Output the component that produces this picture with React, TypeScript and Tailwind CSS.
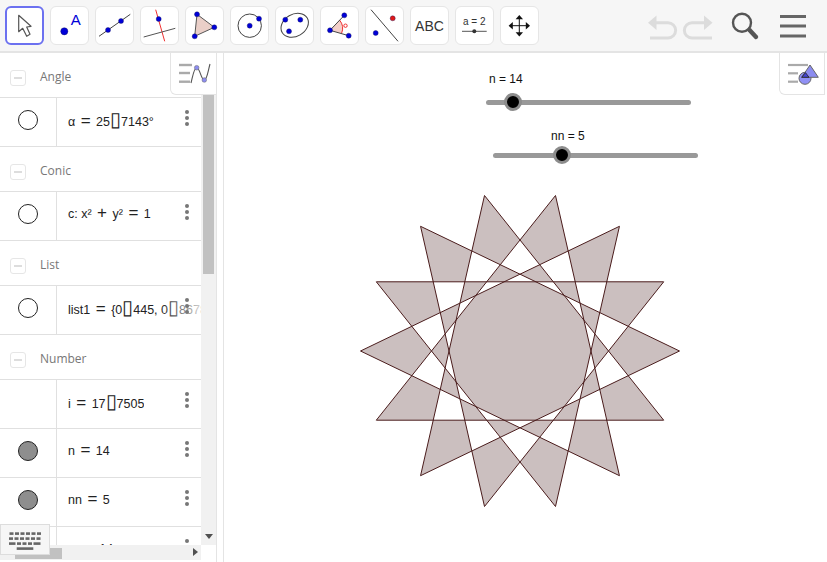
import React from "react";

const BLUE = "#0000d8";

const Pt = ({ x, y, r = 2.5, c = BLUE }: { x: number; y: number; r?: number; c?: string }) => (
  <circle cx={x} cy={y} r={r} fill={c} stroke="#1a1a5a" strokeWidth={0.4} />
);

const toolIcons: React.ReactNode[] = [
  <polygon key="0" points="13.7,9.3 13.7,25.7 17.7,22.3 21.7,30.3 25,28.3 21.7,21 26,20.3" fill="#fff" stroke="#555" strokeWidth={1.2} strokeLinejoin="round" />,
  <g key="1">
    <Pt x={14.3} y={25.3} r={3.6} />
    <text x={25.7} y={18.7} textAnchor="middle" fontSize={15} fill={BLUE} fontFamily="Liberation Sans, sans-serif">A</text>
  </g>,
  <g key="2">
    <line x1={4} y1={30.3} x2={35.3} y2={8.3} stroke="#444" />
    <Pt x={13} y={24} />
    <Pt x={26} y={15} />
  </g>,
  <g key="3">
    <line x1={15.7} y1={3.7} x2={24.7} y2={35.3} stroke="#f03030" />
    <line x1={3.7} y1={31} x2={35.3} y2={22.3} stroke="#555" />
    <Pt x={18.7} y={13} />
  </g>,
  <g key="4">
    <polygon points="12,8.3 29.3,21.3 9.7,30.3" fill="#eacfc8" stroke="#555" />
    <Pt x={12} y={8.3} />
    <Pt x={29.3} y={21.3} />
    <Pt x={9.7} y={30.3} />
  </g>,
  <g key="5">
    <circle cx={19.7} cy={19.7} r={11.7} fill="none" stroke="#444" />
    <Pt x={19.7} y={19.7} />
    <Pt x={29} y={12.7} />
  </g>,
  <g key="6">
    <ellipse cx={19.7} cy={19.3} rx={14.5} ry={11} fill="none" stroke="#444" transform="rotate(-30 19.7 19.3)" />
    <Pt x={10.3} y={13.7} />
    <Pt x={25.3} y={13.7} />
    <Pt x={14} y={25.3} />
  </g>,
  <g key="7">
    <path d="M10 24.3 L19.5 14 A13 13 0 0 1 21.5 27.5 Z" fill="#f3cfc9" />
    <path d="M19.5 14 A13 13 0 0 1 21.5 27.5" fill="none" stroke="#f03030" />
    <line x1={10} y1={24.3} x2={24.3} y2={9.3} stroke="#444" />
    <line x1={10} y1={24.3} x2={28.7} y2={29.7} stroke="#444" />
    <Pt x={10} y={24.3} />
    <Pt x={24.3} y={9.3} />
    <Pt x={28.7} y={29.7} />
    <circle cx={25.5} cy={19.7} r={1.7} fill="none" stroke="#f03030" />
  </g>,
  <g key="8">
    <line x1={6} y1={3.7} x2={33} y2={35.3} stroke="#444" />
    <Pt x={27.7} y={12.3} c="#e01818" />
    <Pt x={10.7} y={27} />
  </g>,
  <text key="9" x={19.5} y={24.7} textAnchor="middle" fontSize={14} fill="#333" fontFamily="Liberation Sans, sans-serif">ABC</text>,
  <g key="10">
    <text x={19.3} y={19} textAnchor="middle" fontSize={10} fill="#333" fontFamily="Liberation Sans, sans-serif">a = 2</text>
    <line x1={7} y1={25.3} x2={31.7} y2={25.3} stroke="#555" />
    <circle cx={19.3} cy={25.3} r={2} fill="#333" />
  </g>,
  <g key="11" fill="#111">
    <path d="M19.3 11 V28.4 M10.6 19.7 H28" stroke="#111" strokeWidth={1} />
    <polygon points="19.3,9 15.6,13.2 23,13.2" />
    <polygon points="19.3,30.4 15.6,26.2 23,26.2" />
    <polygon points="8.6,19.7 12.8,16 12.8,23.4" />
    <polygon points="30,19.7 25.8,16 25.8,23.4" />
  </g>,
];

const ToolButton = ({ active, children }: { active?: boolean; children: React.ReactNode }) => (
  <div
    className={`w-[39px] h-[39px] shrink-0 rounded-md bg-white ${
      active ? "border-2 border-[#6c71f0]" : "border border-[#e6e6e6]"
    }`}
  >
    <svg viewBox="0 0 39 39" className={`w-[39px] h-[39px] max-w-none ${active ? "-m-[2px]" : "-m-px"}`}>
      {children}
    </svg>
  </div>
);

const Toolbar = () => (
  <div className="h-[53px] shrink-0 flex items-start pt-[6px] pl-[5px] bg-[#f6f6f6] border-b-2 border-[#e4e4e4]">
    <div className="flex gap-[6px]">
      {toolIcons.map((icon, i) => (
        <ToolButton key={i} active={i === 0}>
          {icon}
        </ToolButton>
      ))}
    </div>
    <svg viewBox="0 0 176 46" className="w-[176px] h-[46px] ml-[103px] -mt-[6px]">
      <g fill="none" stroke="#dcdcdc" strokeWidth={3}>
        <path d="M12 22.7 H26 A7.6 7.6 0 0 1 26 38 H8" />
        <path d="M63 22.7 H50 A7.6 7.6 0 0 0 50 38 H70" />
      </g>
      <polygon points="6,22.7 14.5,15.5 14.5,30" fill="#dcdcdc" />
      <polygon points="70.5,22.7 62,15.5 62,30" fill="#dcdcdc" />
      <circle cx={100} cy={22.7} r={9} fill="none" stroke="#555" strokeWidth={2.4} />
      <line x1={107.5} y1={30} x2={114} y2={37} stroke="#555" strokeWidth={4.4} strokeLinecap="round" />
      <g stroke="#666" strokeWidth={3}>
        <line x1={138} y1={16.5} x2={164} y2={16.5} />
        <line x1={138} y1={26} x2={164} y2={26} />
        <line x1={138} y1={36} x2={164} y2={36} />
      </g>
    </svg>
  </div>
);

const Dots = () => (
  <div className="absolute left-[185px] top-[12px] flex flex-col gap-[2px]">
    <span className="w-[4px] h-[4px] rounded-full bg-[#777]" />
    <span className="w-[4px] h-[4px] rounded-full bg-[#777]" />
    <span className="w-[4px] h-[4px] rounded-full bg-[#777]" />
  </div>
);

const Header = ({ label }: { label: string }) => (
  <div className="h-[45px] shrink-0 flex items-center border-b border-[#e0e0e0] pl-[10px] pt-[5px]">
    <div className="w-[16px] h-[16px] mt-[1px] rounded-[3px] border border-[#e6e6e6] flex items-center justify-center">
      <span className="w-[8px] h-[2px] bg-[#ddd]" />
    </div>
    <span className="ml-[14px] mb-[2px] text-[12px] text-[#777] font-['Open_Sans',sans-serif]">{label}</span>
  </div>
);

// relation signs are set wider than the digits in the algebra view
const Op = ({ children }: { children: React.ReactNode }) => (
  <span className="mx-[2px] text-[17px] leading-none font-light">{children}</span>
);

const Tofu = () => <span className="text-[20px] leading-none">▯</span>;

const Row = ({
  marble,
  fade,
  children,
}: {
  marble?: "empty" | "full";
  fade?: boolean;
  children: React.ReactNode;
}) => (
  <div className="relative h-[49px] shrink-0 flex border-b border-[#e0e0e0]">
    <div className="w-[57px] shrink-0 flex items-center justify-center border-r border-[#e0e0e0] pb-[4px]">
      {marble === "empty" && <span className="w-[20px] h-[20px] rounded-full border border-[#222] bg-white" />}
      {marble === "full" && <span className="w-[20px] h-[20px] rounded-full border border-[#222] bg-[#8e8e8e]" />}
    </div>
    <div className="pl-[11px] pb-[4px] flex items-center whitespace-pre overflow-hidden text-[12.5px] text-[#222] font-['Liberation_Sans',sans-serif]">
      <span>{children}</span>
    </div>
    {fade && <div className="absolute left-[160px] top-0 bottom-0 w-[41px] bg-gradient-to-r from-white/0 to-white/80" />}
    <Dots />
  </div>
);

const AlgebraPanel = () => (
  <div className="relative w-[217px] shrink-0 flex flex-col border-r border-[#e4e4e4] pb-[2px]">
    <div className="flex-1 min-h-0 flex">
      <div className="w-[201px] shrink-0 overflow-hidden flex flex-col">
        <Header label="Angle" />
        <Row marble="empty">α <Op>=</Op> 25<Tofu />7143°</Row>
        <Header label="Conic" />
        <Row marble="empty">c: x² <Op>+</Op> y² <Op>=</Op> 1</Row>
        <Header label="List" />
        <Row marble="empty" fade>list1 <Op>=</Op> {"{"}0<Tofu />445, 0<Tofu />8678</Row>
        <Header label="Number" />
        <Row>i <Op>=</Op> 17<Tofu />7505</Row>
        <Row marble="full">n <Op>=</Op> 14</Row>
        <Row marble="full">nn <Op>=</Op> 5</Row>
        <Row>m <Op>=</Op> 14</Row>
      </div>
      {/* vertical scrollbar */}
      <div className="flex-1 bg-[#f1f1f1] flex flex-col">
        <div className="h-[221px] ml-[2px] mr-[2px] bg-[#c1c1c1]" />
        <div className="flex-1 flex items-end justify-center pb-[6px]">
          <span className="border-x-[4px] border-x-transparent border-t-[5px] border-t-[#505050]" />
        </div>
      </div>
    </div>
    {/* horizontal scrollbar */}
    <div className="h-[15px] shrink-0 flex">
      <div className="w-[201px] bg-[#f1f1f1] flex items-center pl-[15px] relative">
        <div className="w-[47px] h-[11px] mt-[1px] bg-[#c1c1c1]" />
        <span className="absolute right-[3px] top-[3px] border-y-[4px] border-y-transparent border-l-[5px] border-l-[#505050]" />
      </div>
    </div>
    {/* style bar toggle */}
    <div className="absolute left-[170px] top-0 w-[47px] h-[42px] bg-white border-r border-b border-l border-[#e4e4e4] rounded-bl-md">
      <svg viewBox="0 0 45 41" className="w-full h-full">
        <g stroke="#aaa" strokeWidth={2.4}>
          <line x1={8} y1={12} x2={21} y2={12} />
          <line x1={8} y1={20} x2={19} y2={20} />
          <line x1={8} y1={28.7} x2={19} y2={28.7} />
        </g>
        <path d="M20 30 C22 22 23 14.7 25.7 14.7 C29 14.7 30 27 33.3 27 C36 27 37 18 39 11" fill="none" stroke="#555" strokeWidth={1.1} />
        <circle cx={25.7} cy={14.7} r={2.3} fill="#8c8cf0" stroke="#666" strokeWidth={0.5} />
        <circle cx={33.3} cy={27} r={2.3} fill="#8c8cf0" stroke="#666" strokeWidth={0.5} />
      </svg>
    </div>
    {/* keyboard button */}
    <div className="absolute left-0 bottom-[7px] w-[50px] h-[31px] bg-[#f6f6f6] border border-[#ddd] flex items-center justify-center">
      <svg viewBox="0 0 34 24" className="w-[34px] h-[24px]">
        <g fill="#666">
          {[0, 1, 2, 3, 4, 5].map((i) => (
            <rect key={i} x={1.5 + i * 5.5} y={4.3} width={4} height={2.6} />
          ))}
          {[0, 1, 2, 3, 4, 5].map((i) => (
            <rect key={i} x={1 + i * 5.5} y={9.3} width={4} height={2.6} />
          ))}
          <rect x={1} y={14.3} width={6.5} height={2.6} />
          <rect x={9} y={14.3} width={4} height={2.6} />
          <rect x={14.5} y={14.3} width={4} height={2.6} />
          <rect x={20} y={14.3} width={4} height={2.6} />
          <rect x={25.5} y={14.3} width={7} height={2.6} />
          <rect x={8.7} y={19.3} width={16.6} height={2.6} />
        </g>
      </svg>
    </div>
  </div>
);

const Slider = ({
  label,
  left,
  top,
  labelLeft,
  labelTop,
  knob,
}: {
  label: string;
  left: number;
  top: number;
  labelLeft: number;
  labelTop: number;
  knob: number;
}) => (
  <div className="absolute w-[205px] h-[5px] rounded-full bg-[#999]" style={{ left, top }}>
    <span
      className="absolute whitespace-nowrap text-[12px] leading-[14px] text-[#111] font-['Liberation_Sans',sans-serif]"
      style={{ left: labelLeft, top: labelTop }}
    >
      {label}
    </span>
    <span className="absolute -top-[7px] w-[18px] h-[18px] rounded-full bg-black border-[3px] border-[#8c8c8c]" style={{ left: knob - 9 }} />
  </div>
);

// {14/5} star, even-odd fill leaves the alternating white cells
const cx = 296;
const cy = 298;
const R = 159.5;
const starPoints = Array.from({ length: 14 }, (_, i) => {
  const a = (i * 5 * 2 * Math.PI) / 14;
  return `${(cx + R * Math.cos(a)).toFixed(2)},${(cy + R * Math.sin(a)).toFixed(2)}`;
}).join(" ");

const Graphics = () => (
  <div className="relative flex-1 min-w-0 bg-white border-l border-[#e4e4e4] ml-[6px]">
    <svg className="absolute inset-0 w-full h-full">
      <polygon points={starPoints} fill="#cbbfbf" fillRule="evenodd" stroke="#4a1c1c" strokeWidth={1} />
    </svg>
    <Slider label="n = 14" left={262} top={47} labelLeft={3} labelTop={-28} knob={27} />
    <Slider label="nn = 5" left={269} top={100} labelLeft={58} labelTop={-24} knob={69} />
    <div className="absolute right-[2px] top-0 w-[46px] h-[42px] bg-white border-r border-b border-l border-[#e4e4e4] rounded-bl-md">
      <svg viewBox="0 0 44 41" className="w-full h-full">
        <g stroke="#aaa" strokeWidth={2.2}>
          <line x1={8} y1={12} x2={28} y2={12} />
          <line x1={8} y1={20.3} x2={18} y2={20.3} />
          <line x1={8} y1={28.7} x2={18} y2={28.7} />
        </g>
        <circle cx={25} cy={25.3} r={6} fill="#9090f5" stroke="#666" />
        <polygon points="30,12 38.3,24.3 21.7,24.3" fill="#8c8cf0" stroke="#666" />
        <polygon points="25.5,19.6 29,24.3 21.7,24.3" fill="#4444d0" stroke="#222" strokeWidth={0.8} />
      </svg>
    </div>
  </div>
);

export default function App() {
  return (
    <div className="w-[827px] h-[562px] overflow-hidden flex flex-col bg-white">
      <Toolbar />
      <div className="flex-1 min-h-0 flex">
        <AlgebraPanel />
        <Graphics />
      </div>
    </div>
  );
}
